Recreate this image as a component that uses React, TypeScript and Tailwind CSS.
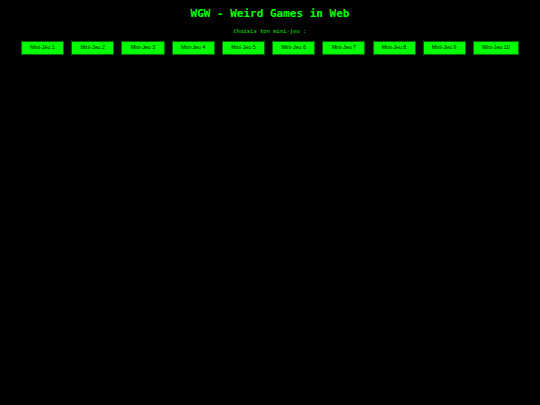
export default function App() {
  const games = Array.from({ length: 10 }, (_, i) => `Mini-Jeu ${i + 1}`);
  return (
    <div className="min-h-[405px] w-full bg-black flex flex-col items-center">
      <h1 className="mt-[7.5px] text-[11px] leading-[11px] font-bold text-[#00ff00] font-['DejaVu_Sans_Mono',monospace]">
        WGW - Weird Games in Web
      </h1>
      <p className="mt-[10px] text-[5.5px] leading-[5.5px] text-[#00f000] font-['DejaVu_Sans_Mono',monospace]">
        Choisis ton mini-jeu :
      </p>
      <div className="mt-[7px] flex justify-center gap-[7.1px]">
        {games.map((g) => (
          <button
            key={g}
            className="h-[14px] px-[8.35px] bg-[#00ff00] border border-[#006600] text-black text-[5.3px] leading-none font-['Liberation_Sans',Arial,sans-serif]"
          >
            {g}
          </button>
        ))}
      </div>
    </div>
  );
}
